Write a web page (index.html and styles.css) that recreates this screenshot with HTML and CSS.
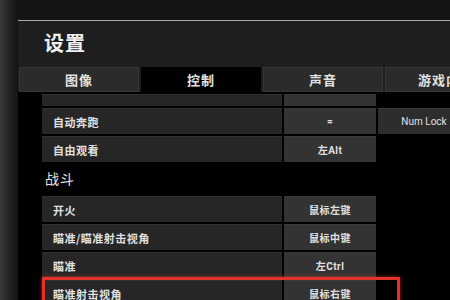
FILE: index.html
```html
<!DOCTYPE html>
<html lang="zh-CN">
<head>
    <meta charset="UTF-8">
    <meta name="viewport" content="width=device-width, initial-scale=1.0">
    <title>设置</title>
    <link rel="stylesheet" href="styles.css">
</head>
<body>
    <div class="settings-window">
        <div class="window-head">
            <h1>设置</h1>
        </div>
        <div class="tabs">
            <div class="tab">图像</div>
            <div class="tab active">控制</div>
            <div class="tab">声音</div>
            <div class="tab last">游戏内</div>
        </div>
        <div class="content">
            <div class="bind-row cut">
                <div class="label"></div>
                <div class="key"></div>
                <div class="key alt empty"></div>
            </div>
            <div class="bind-row">
                <div class="label">自动奔跑</div>
                <div class="key">=</div>
                <div class="key alt">Num Lock</div>
            </div>
            <div class="bind-row">
                <div class="label">自由观看</div>
                <div class="key">左Alt</div>
                <div class="key alt empty"></div>
            </div>
            <div class="section-title">战斗</div>
            <div class="bind-row">
                <div class="label">开火</div>
                <div class="key">鼠标左键</div>
                <div class="key alt empty"></div>
            </div>
            <div class="bind-row">
                <div class="label">瞄准/瞄准射击视角</div>
                <div class="key">鼠标中键</div>
                <div class="key alt empty"></div>
            </div>
            <div class="bind-row">
                <div class="label">瞄准</div>
                <div class="key">左Ctrl</div>
                <div class="key alt empty"></div>
            </div>
            <div class="bind-row marked">
                <div class="label">瞄准射击视角</div>
                <div class="key">鼠标右键</div>
                <div class="key alt empty"></div>
                <div class="highlight"></div>
            </div>
        </div>
    </div>
</body>
</html>
```

FILE: styles.css
```css
body {
    margin: 0;
    height: 300px;
    overflow: hidden;
    font-family: "Noto Sans CJK SC", "Noto Sans", sans-serif;
    background: linear-gradient(90deg, #3a3a3a 0, #242424 9px, #141414 18px);
    padding: 20px 0 0 18px;
    box-sizing: border-box;
}
.settings-window {
    width: 432px;
    height: 280px;
    overflow: hidden;
    box-sizing: border-box;
    border-top: 1px solid #a8a8a8;
    background-color: #1e1e1e;
}
.window-head {
    height: 46px;
    display: flex;
    align-items: center;
    padding-left: 26px;
}
.window-head h1 {
    margin: 0 0 3px;
    font-size: 20px;
    font-weight: bold;
    color: #f0f0f0;
    letter-spacing: 1px;
}
.tabs {
    display: flex;
    gap: 2px;
    padding-left: 1px;
}
.tab {
    flex: none;
    width: 120px;
    height: 25px;
    box-sizing: border-box;
    display: flex;
    align-items: center;
    justify-content: center;
    background-color: #2b2b2b;
    border: 1px solid #363636;
    color: #e2e2e2;
    font-size: 13px;
    font-weight: bold;
    letter-spacing: 1px;
}
.tab.active {
    background-color: #000;
    border-color: #000;
}
.tab.last {
    justify-content: flex-start;
    padding-left: 32px;
}
.content {
    background-color: #000;
    padding: 2px 0 0 24px;
    display: flex;
    flex-direction: column;
    gap: 2px;
    height: 210px;
}
.bind-row {
    flex: none;
    display: grid;
    grid-template-columns: 240px 92px 92px;
    column-gap: 2px;
    height: 26px;
    position: relative;
}
.bind-row.cut {
    height: 12px;
}
.label {
    background-color: #262626;
    border-top: 1px solid #303030;
    color: #e0e0e0;
    font-size: 11px;
    font-weight: bold;
    display: flex;
    align-items: center;
    padding-left: 11px;
    letter-spacing: 0.5px;
}
.key {
    background-color: #333;
    border-top: 1px solid #3b3b3b;
    color: #e0e0e0;
    font-family: Roboto, "Noto Sans CJK SC", sans-serif;
    font-size: 10px;
    font-weight: bold;
    display: flex;
    align-items: center;
    justify-content: center;
    letter-spacing: 0.5px;
}
.key.alt {
    background-color: #2d2d2d;
    font-size: 10px;
    font-weight: normal;
    letter-spacing: 0;
}
.key.empty {
    background-color: #000;
    border-top-color: #000;
}
.section-title {
    flex: none;
    height: 30px;
    display: flex;
    align-items: center;
    padding: 0 0 3px 3px;
    box-sizing: border-box;
    color: #e6e6e6;
    font-size: 14px;
    letter-spacing: 1px;
}
.highlight {
    position: absolute;
    top: -3px;
    left: 0;
    width: 358px;
    height: 40px;
    box-sizing: border-box;
    border: 3px solid #e3312c;
    box-shadow: 0 0 4px rgba(255, 70, 60, 0.6);
}
```
